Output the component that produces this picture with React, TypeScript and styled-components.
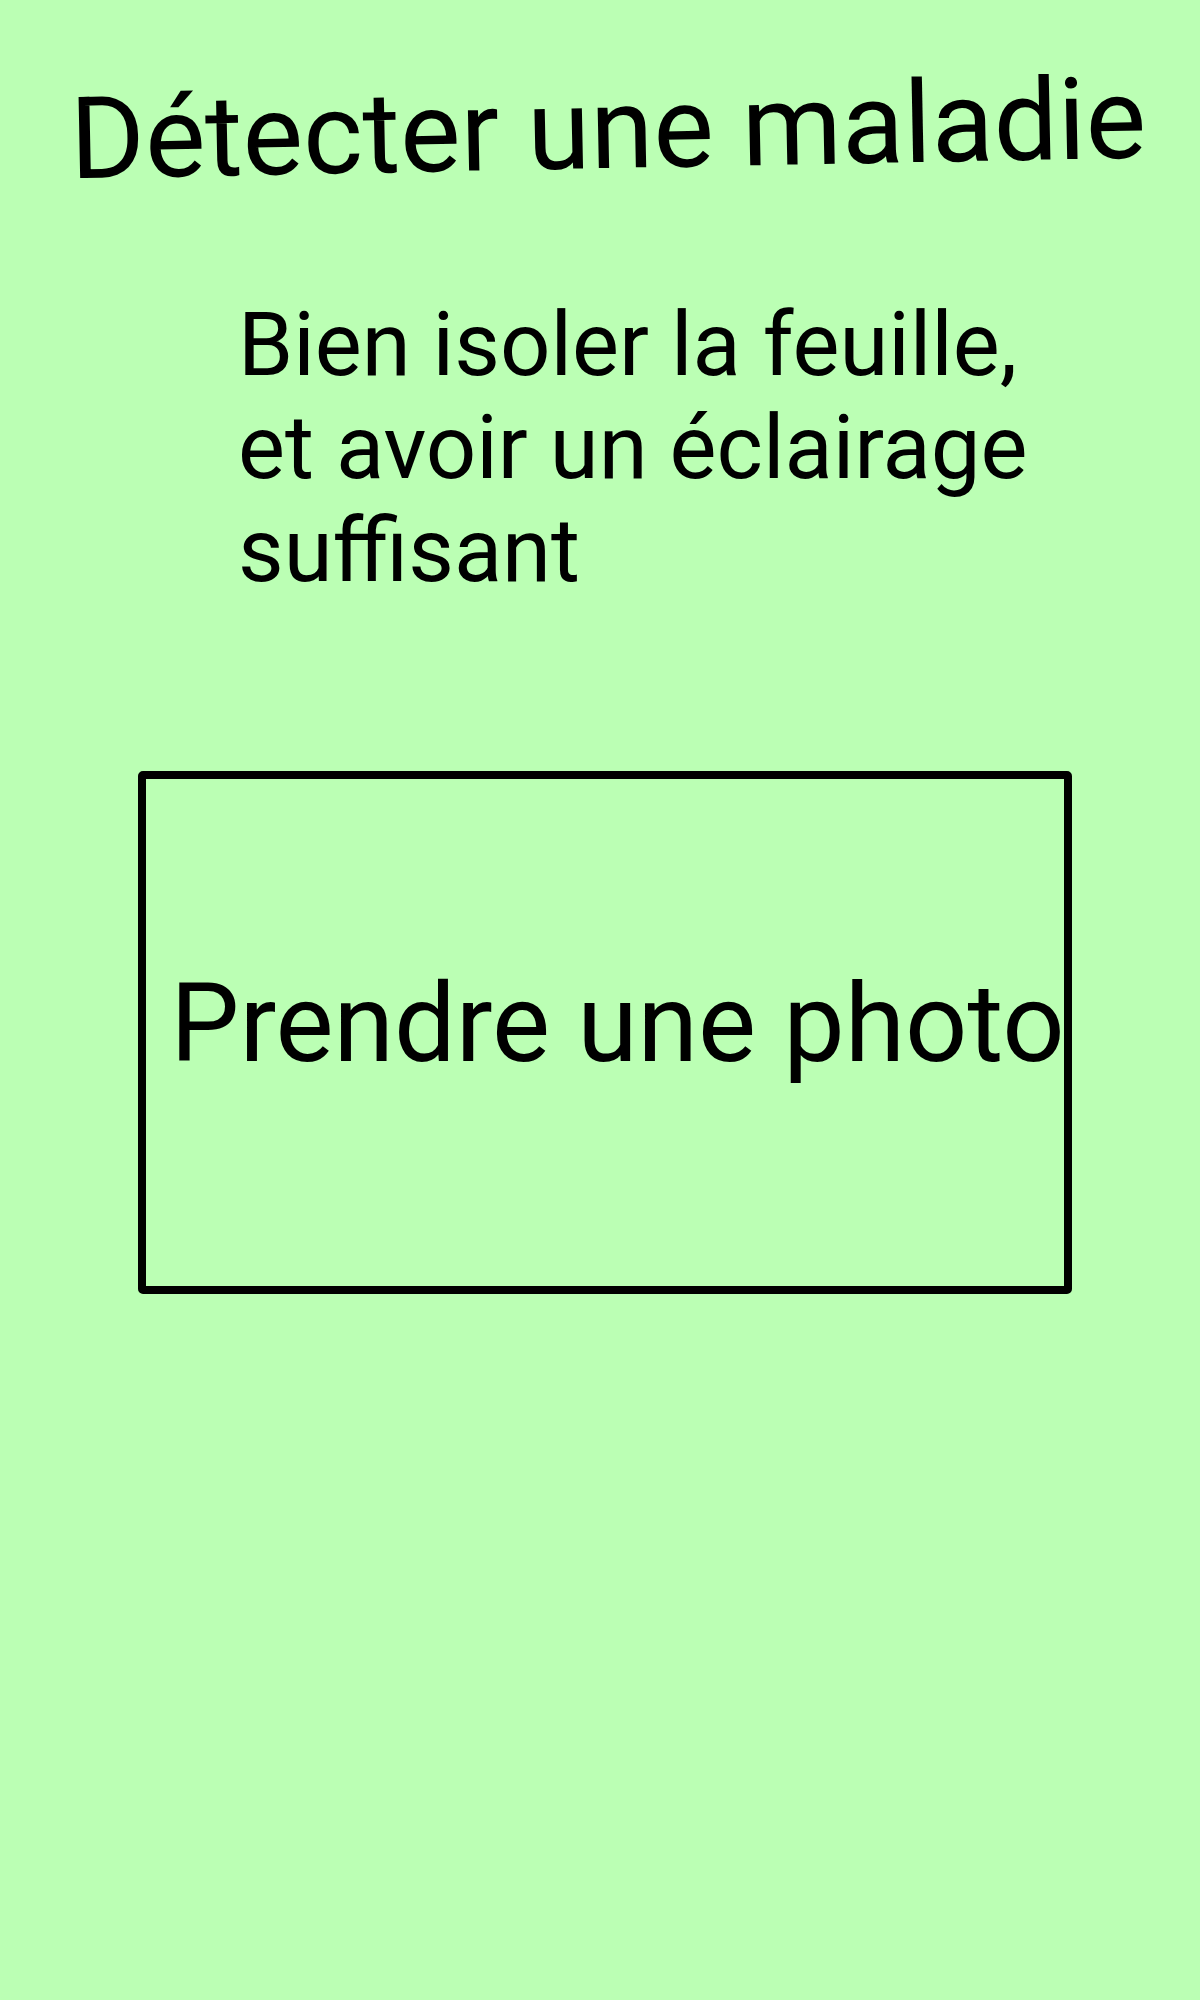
import React from "react";
import styled, { createGlobalStyle } from "styled-components";

const GlobalStyle = createGlobalStyle`
  html, body {
    margin: 0;
    padding: 0;
    background: #bbffb4;
  }
  body {
    font-family: Roboto, "Liberation Sans", sans-serif;
    color: #000;
  }
`;

const Page = styled.main`
  width: 1200px;
  min-height: 2000px;
  background: #bbffb4;
  display: flex;
  flex-direction: column;
  align-items: flex-start;
`;

const Title = styled.h1`
  margin: 62px 0 0 70px;
  font-family: Roboto, "Liberation Sans", sans-serif;
  font-weight: 400;
  font-size: 114px;
  line-height: normal;
  white-space: nowrap;
  transform: rotate(-1.1deg);
  transform-origin: center;
`;

const Hint = styled.p`
  margin: 98px 0 0 238px;
  font-size: 88.6px;
  line-height: 103px;
  font-weight: 400;
  max-width: 820px;
`;

const PhotoButton = styled.button`
  margin: 168px 0 0 138px;
  width: 934px;
  height: 523px;
  box-sizing: border-box;
  border: 8px solid #000;
  border-radius: 5px;
  background: transparent;
  display: flex;
  align-items: center;
  justify-content: center;
  padding: 0 0 18px 25px;
  font-family: Roboto, "Liberation Sans", sans-serif;
  font-size: 109.5px;
  color: #000;
  white-space: nowrap;
  cursor: pointer;
`;

export default function App() {
  return (
    <>
      <GlobalStyle />
      <Page>
        <Title>Détecter une maladie</Title>
        <Hint>
          Bien isoler la feuille,
          <br />
          et avoir un éclairage
          <br />
          suffisant
        </Hint>
        <PhotoButton type="button">Prendre une photo</PhotoButton>
      </Page>
    </>
  );
}
